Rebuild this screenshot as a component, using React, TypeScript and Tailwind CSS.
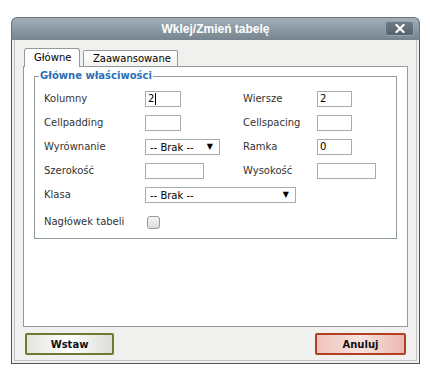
import React from "react";

const inputCls =
  "h-[16px] border border-[#a5acb2] bg-white text-[10px] leading-[14px] pl-[2px] text-[#000] box-border";

function Label({ children, w }: { children: React.ReactNode; w: string }) {
  return <div className={`${w} shrink-0 text-[10px] text-[#333] leading-[12px]`}>{children}</div>;
}

function Select({ w, label }: { w: string; label: string }) {
  return (
    <div className={`${w} h-[16px] border border-[#a5acb2] bg-white flex items-center justify-between pl-[4px] pr-[6px] text-[10px] text-[#000] box-border shrink-0`}>
      <span>{label}</span>
      <span className="text-[8px] leading-none">▼</span>
    </div>
  );
}

export default function App() {
  return (
    <div className="w-[430px] h-[376px] bg-white pt-[17px] pl-[11px] font-['DejaVu_Sans',Verdana,sans-serif]">
      <div className="w-[409px] flex flex-col">
        {/* title bar */}
        <div className="relative h-[23px] rounded-t-[6px] border border-b-0 border-[#66737e] bg-linear-to-b from-[#a3afb8] to-[#76848f] flex items-center justify-center">
          <span className="text-white font-bold text-[12px] font-['Liberation_Sans_Narrow','Liberation_Sans',Arial,sans-serif] tracking-[0px]">
            Wklej/Zmień tabelę
          </span>
          <div className="absolute right-[5px] top-[3px] w-[29px] h-[15px] rounded-[3px] border border-[#98a4ac] bg-linear-to-b from-[#6d7b86] to-[#56636d] flex items-center justify-center">
            <svg width="10" height="9" viewBox="0 0 10 9">
              <path d="M1.5 1 L8.5 8 M8.5 1 L1.5 8" stroke="#fff" strokeWidth="2.2" strokeLinecap="square" />
            </svg>
          </div>
        </div>
        {/* body */}
        <div className="h-[324px] bg-[#f0f0ee] border border-t-0 border-[#555] pl-[2px] pr-[2px] pb-[2px] flex flex-col">
          <div className="flex-1 border border-t-0 border-[#c4c4c0] flex flex-col pt-[8px] pl-[8px] pr-[8px]">
            {/* tabs */}
            <div className="flex items-end h-[18px] pl-[1px] relative z-10">
              <div className="w-[56px] h-[19px] bg-white border border-b-0 border-[#919b9c] rounded-t-[3px] pl-[9px] text-[10px] text-[#000] leading-[17px] -mb-[1px]">
                Główne
              </div>
              <div className="ml-[3px] w-[95px] h-[16px] bg-linear-to-b from-white to-[#f3f3f1] border border-b-0 border-[#919b9c] rounded-t-[2px] pl-[9px] text-[10px] text-[#000] leading-[15px]">
                Zaawansowane
              </div>
            </div>
            {/* panel */}
            <div className="w-[385px] h-[261px] bg-white border border-[#919b9c] pt-[9px] px-[10px]">
              <div className="relative border border-[#919b9c] h-[163px] pt-[10px] pl-[9px]">
                <span className="absolute -top-[8px] left-[4px] bg-white px-[1px] text-[10px] font-bold text-[#2b6fb6] leading-[14px]">
                  Główne właściwości
                </span>
                {/* row 1 */}
                <div className="flex items-center h-[24px]">
                  <Label w="w-[101px]">Kolumny</Label>
                  <div className="w-[98px] shrink-0">
                    <div className={`${inputCls} w-[36px] border-[#7b9ebd] flex items-center`}>
                      <span>2</span>
                      <span className="w-[1px] h-[12px] bg-black ml-[1px]" />
                    </div>
                  </div>
                  <Label w="w-[74px]">Wiersze</Label>
                  <div className={`${inputCls} w-[35px]`}>2</div>
                </div>
                {/* row 2 */}
                <div className="flex items-center h-[24px]">
                  <Label w="w-[101px]">Cellpadding</Label>
                  <div className="w-[98px] shrink-0">
                    <div className={`${inputCls} w-[36px]`} />
                  </div>
                  <Label w="w-[74px]">Cellspacing</Label>
                  <div className={`${inputCls} w-[35px]`} />
                </div>
                {/* row 3 */}
                <div className="flex items-center h-[24px]">
                  <Label w="w-[101px]">Wyrównanie</Label>
                  <div className="w-[98px] shrink-0">
                    <Select w="w-[75px]" label="-- Brak --" />
                  </div>
                  <Label w="w-[74px]">Ramka</Label>
                  <div className={`${inputCls} w-[35px]`}>0</div>
                </div>
                {/* row 4 */}
                <div className="flex items-center h-[24px]">
                  <Label w="w-[101px]">Szerokość</Label>
                  <div className="w-[98px] shrink-0">
                    <div className={`${inputCls} w-[59px]`} />
                  </div>
                  <Label w="w-[74px]">Wysokość</Label>
                  <div className={`${inputCls} w-[59px]`} />
                </div>
                {/* row 5 */}
                <div className="flex items-center h-[24px]">
                  <Label w="w-[101px]">Klasa</Label>
                  <Select w="w-[151px]" label="-- Brak --" />
                </div>
                {/* row 6 */}
                <div className="flex items-center h-[22px] mt-[4px]">
                  <Label w="w-[103px]">Nagłówek tabeli</Label>
                  <div className="w-[13px] h-[13px] rounded-[3px] border border-[#9a9a9a] bg-linear-to-b from-[#f4f4f4] to-[#dcdcdc]" />
                </div>
              </div>
            </div>
            {/* buttons */}
            <div className="flex justify-between mt-[6px] pl-[2px] pr-[2px]">
              <div className="w-[89px] h-[22px] border-2 border-[#6b7b33] rounded-[2px] bg-linear-to-r from-[#e4e4e0] via-white to-[#dcdcd8] flex items-center justify-center text-[10px] font-bold text-[#111]">
                Wstaw
              </div>
              <div className="w-[91px] h-[22px] border-2 border-[#b0401f] rounded-[2px] bg-linear-to-r from-[#eec4bd] via-[#f8e2de] to-[#e9b8b0] flex items-center justify-center text-[10px] font-bold text-[#111]">
                Anuluj
              </div>
            </div>
          </div>
        </div>
      </div>
    </div>
  );
}
